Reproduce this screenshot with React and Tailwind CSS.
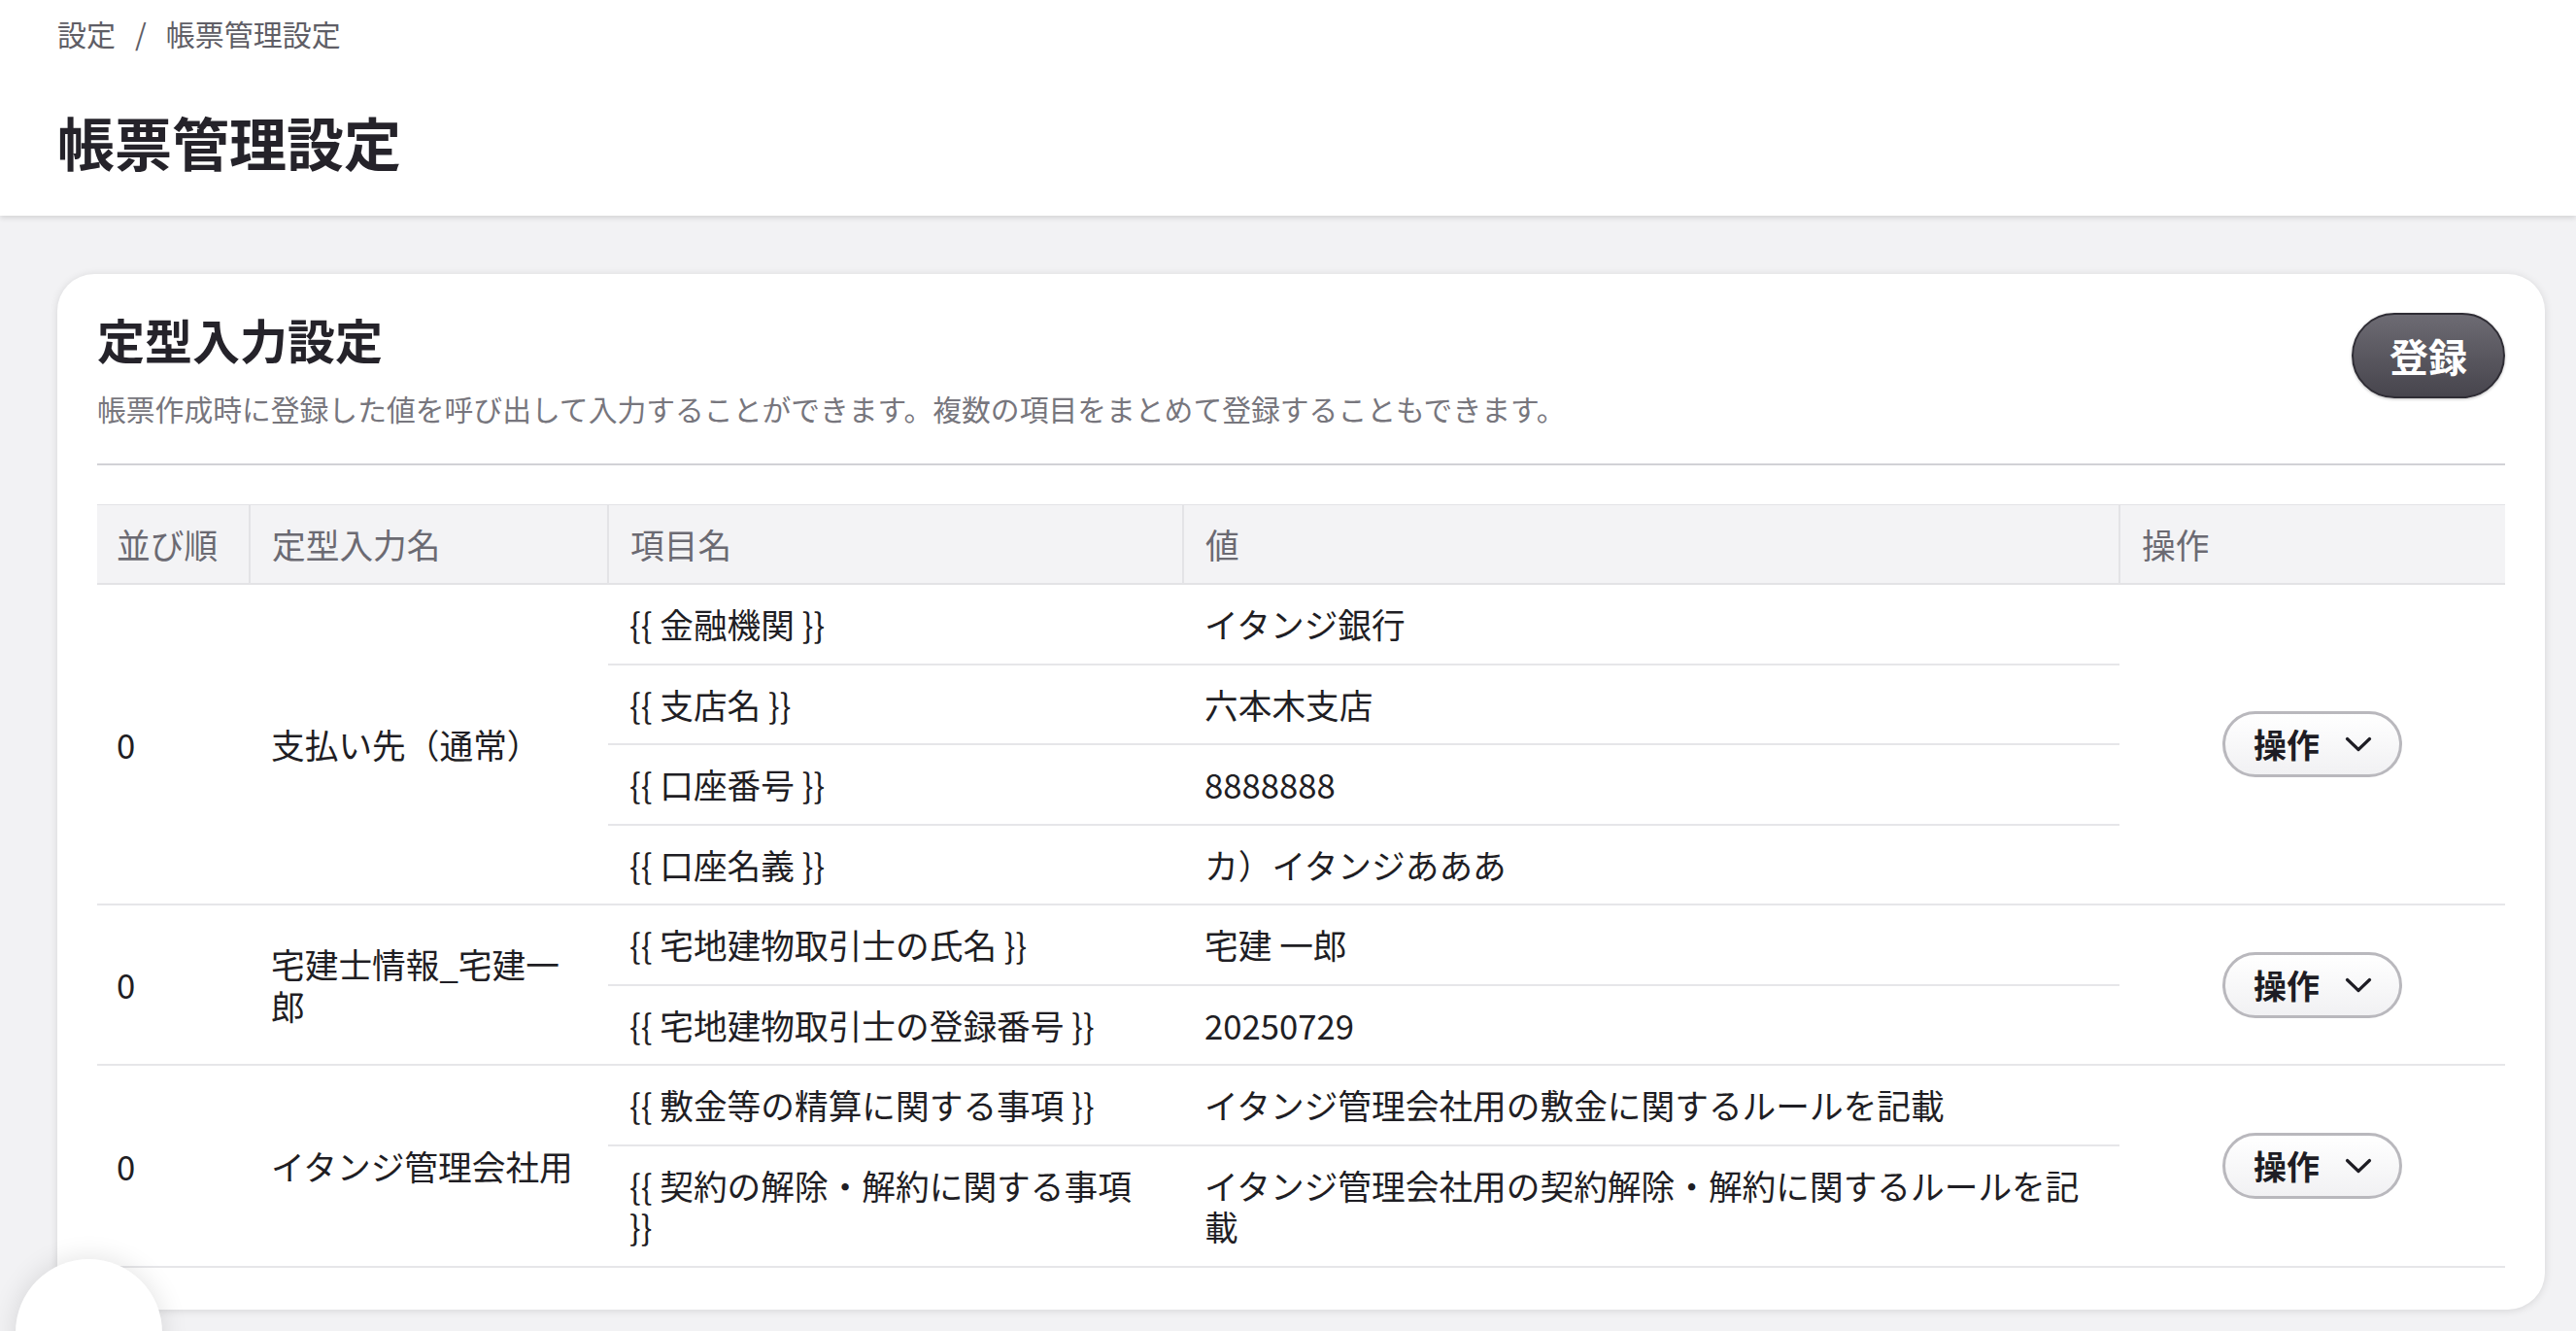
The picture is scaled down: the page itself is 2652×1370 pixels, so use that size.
import React from "react";

const presets = [
  {
    order: 0,
    name: "支払い先（通常）",
    fields: [
      ["{{ 金融機関 }}", "イタンジ銀行"],
      ["{{ 支店名 }}", "六本木支店"],
      ["{{ 口座番号 }}", "8888888"],
      ["{{ 口座名義 }}", "カ）イタンジあああ"],
    ],
  },
  {
    order: 0,
    name: "宅建士情報_宅建一郎",
    fields: [
      ["{{ 宅地建物取引士の氏名 }}", "宅建 一郎"],
      ["{{ 宅地建物取引士の登録番号 }}", "20250729"],
    ],
  },
  {
    order: 0,
    name: "イタンジ管理会社用",
    fields: [
      ["{{ 敷金等の精算に関する事項 }}", "イタンジ管理会社用の敷金に関するルールを記載"],
      ["{{ 契約の解除・解約に関する事項 }}", "イタンジ管理会社用の契約解除・解約に関するルールを記載"],
    ],
  },
];

const font = { fontFamily: '"Noto Sans CJK JP", "Noto Sans", sans-serif' };

const Chevron = () => (
  <svg width="28" height="16" viewBox="0 0 28 16" fill="none" className="shrink-0">
    <polyline points="2.5,2.5 14,13.5 25.5,2.5" stroke="currentColor" strokeWidth="3.2" strokeLinecap="round" strokeLinejoin="round" />
  </svg>
);

const OpsButton = () => (
  <button className="inline-flex items-center h-[68px] pl-[29px] pr-[28px] gap-[26px] rounded-full border-[3px] border-[#b9b8bd] bg-gradient-to-b from-white to-[#f1f1f3] text-[34px] font-bold text-[#1e1d24]">
    <span className="leading-none">操作</span>
    <Chevron />
  </button>
);

const PresetTable = () => (
  <table className="w-full table-fixed border-collapse text-[34.7px] text-[#1f1e24]">
    <colgroup>
      <col className="w-[157px]" />
      <col className="w-[369px]" />
      <col className="w-[592px]" />
      <col className="w-[964px]" />
      <col />
    </colgroup>
    <thead>
      <tr className="bg-[#f3f3f5] text-[#6b6a72] border-t border-b-2 border-[#e3e3e6]">
        <th className="pl-[20px] pr-2 py-[19px] leading-[42px] font-normal text-left">並び順</th>
        <th className="px-[22px] py-[19px] leading-[42px] font-normal text-left border-l-2 border-[#e3e3e6]">定型入力名</th>
        <th className="px-[22px] py-[19px] leading-[42px] font-normal text-left border-l-2 border-[#e3e3e6]">項目名</th>
        <th className="px-[22px] py-[19px] leading-[42px] font-normal text-left border-l-2 border-[#e3e3e6]">値</th>
        <th className="px-[22px] py-[19px] leading-[42px] font-normal text-left border-l-2 border-[#e3e3e6]">操作</th>
      </tr>
    </thead>
    <tbody>
      {presets.map((preset, gi) =>
        preset.fields.map(([label, value], fi) => (
          <tr key={`${gi}-${fi}`}>
            {fi === 0 && (
              <>
                <td rowSpan={preset.fields.length} className="pl-[20px] pr-2 leading-[42.5px] align-middle border-b-2 border-[#e6e6e9]">
                  {preset.order}
                </td>
                <td rowSpan={preset.fields.length} className="pl-[22px] pr-[26px] leading-[42.5px] align-middle border-b-2 border-[#e6e6e9]">
                  {preset.name}
                </td>
              </>
            )}
            <td className="px-[22px] py-[19px] leading-[42.5px] align-middle border-b-2 border-[#e6e6e9]">{label}</td>
            <td className="px-[22px] py-[19px] leading-[42.5px] align-middle border-b-2 border-[#e6e6e9]">{value}</td>
            {fi === 0 && (
              <td rowSpan={preset.fields.length} className="text-center align-middle border-b-2 border-[#e6e6e9]">
                <OpsButton />
              </td>
            )}
          </tr>
        ))
      )}
    </tbody>
  </table>
);

export default function App() {
  return (
    <div className="min-h-screen bg-[#f2f2f4]" style={font}>
      <header className="relative z-10 bg-white px-[59px] pt-[14px] pb-[36px] shadow-[0_2px_6px_rgba(0,0,0,0.14)]">
        <nav className="flex items-center gap-[20px] text-[30px] leading-[40px] text-[#5f5e66]">
          <span>設定</span>
          <span>/</span>
          <span>帳票管理設定</span>
        </nav>
        <h1 className="mt-[52px] text-[59px] leading-[80px] font-bold text-[#25232a]">帳票管理設定</h1>
      </header>

      <main className="pl-[59px] pr-[32px] pt-[60px] pb-[40px]">
        <section className="bg-white rounded-[38px] px-[41px] pt-[37px] pb-[43px] shadow-[0_1px_8px_rgba(0,0,0,0.12)]">
          <div className="flex items-start justify-between">
            <div>
              <h2 className="text-[49px] leading-[60px] font-bold text-[#25232a]">定型入力設定</h2>
              <p className="mt-[21px] text-[29.8px] leading-[40px] text-[#77767d]">
                帳票作成時に登録した値を呼び出して入力することができます。複数の項目をまとめて登録することもできます。
              </p>
            </div>
            <button className="mt-[3px] h-[88px] w-[158px] rounded-full border-2 border-[#2f2d35] bg-gradient-to-b from-[#6d6b73] to-[#47454d] text-[40px] font-bold text-white shadow-[0_1px_3px_rgba(0,0,0,0.25)]">
              登録
            </button>
          </div>
          <div className="mt-[37px] h-[2px] bg-[#d2d2d6]" />
          <div className="mt-[40px]">
            <PresetTable />
          </div>
        </section>
      </main>

      {/* floating help button, mostly below the fold */}
      <div className="fixed left-[16px] bottom-[-77px] w-[151px] h-[151px] rounded-full bg-white shadow-[0_0_28px_rgba(0,0,0,0.12)]" />
    </div>
  );
}
